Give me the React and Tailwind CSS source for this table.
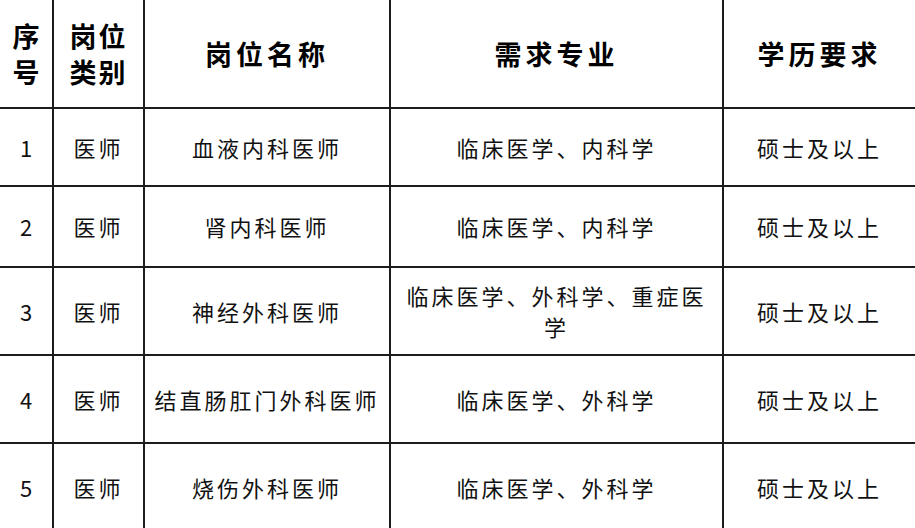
import React from "react";

const rows = [
  { n: "1", t: "医师", name: "血液内科医师", major: "临床医学、内科学", edu: "硕士及以上", h: "h-[78px]" },
  { n: "2", t: "医师", name: "肾内科医师", major: "临床医学、内科学", edu: "硕士及以上", h: "h-[81px]" },
  { n: "3", t: "医师", name: "神经外科医师", major: "临床医学、外科学、重症医学", edu: "硕士及以上", h: "h-[88px]" },
  { n: "4", t: "医师", name: "结直肠肛门外科医师", major: "临床医学、外科学", edu: "硕士及以上", h: "h-[88px]" },
  { n: "5", t: "医师", name: "烧伤外科医师", major: "临床医学、外科学", edu: "硕士及以上", h: "h-[86px]" },
];

const font = "font-['Noto_Sans_CJK_SC','Noto_Sans',sans-serif]";

export default function App() {
  const head = "flex items-center justify-center text-center font-bold text-[27px] leading-[36px] text-black";
  const body = "flex items-center justify-center text-center text-[22px] leading-[31px] tracking-[3px] text-[#111]";
  return (
    <div className={`w-[915px] h-[528px] overflow-hidden bg-white ${font}`}>
      <div className="grid grid-cols-[54px_91px_246px_333px_1fr]">
        <div className={`${head} h-[109px] border-r-2 border-b-2 border-[#1c1c1c]`}>
          <span>序<br />号</span>
        </div>
        <div className={`${head} h-[109px] border-r-2 border-b-2 border-[#1c1c1c] tracking-[2px]`}>
          <span>岗位<br />类别</span>
        </div>
        <div className={`${head} h-[109px] border-r-2 border-b-2 border-[#1c1c1c] tracking-[4px]`}>岗位名称</div>
        <div className={`${head} h-[109px] border-r-2 border-b-2 border-[#1c1c1c] tracking-[4px]`}>需求专业</div>
        <div className={`${head} h-[109px] border-b-2 border-[#1c1c1c] tracking-[4px]`}>学历要求</div>
        {rows.map((r, i) => {
          const last = i === rows.length - 1;
          const b = last ? "" : "border-b-2";
          return (
            <React.Fragment key={r.n}>
              <div className={`${body} ${r.h} ${b} border-r-2 border-[#1c1c1c] tracking-normal text-[20px]`}>{r.n}</div>
              <div className={`${body} ${r.h} ${b} border-r-2 border-[#1c1c1c]`}>{r.t}</div>
              <div className={`${body} ${r.h} ${b} border-r-2 border-[#1c1c1c] px-1`}>{r.name}</div>
              <div className={`${body} ${r.h} ${b} border-r-2 border-[#1c1c1c] px-[11px]`}>{r.major}</div>
              <div className={`${body} ${r.h} ${b} border-[#1c1c1c]`}>{r.edu}</div>
            </React.Fragment>
          );
        })}
      </div>
    </div>
  );
}
